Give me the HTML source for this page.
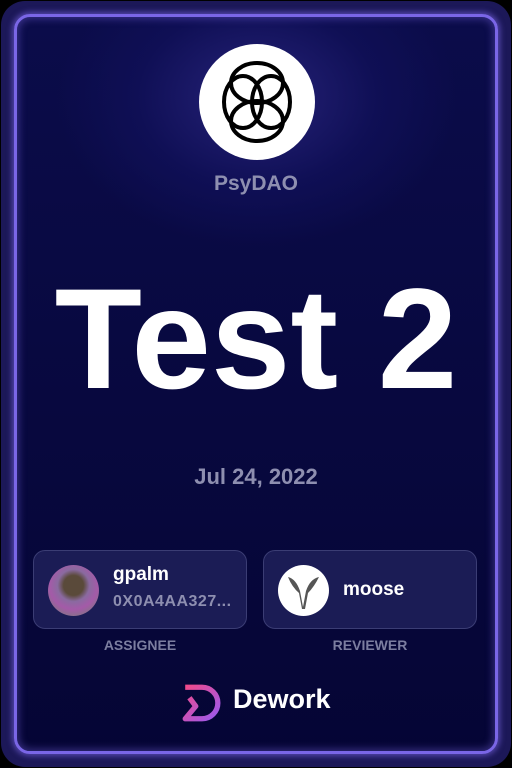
<!DOCTYPE html>
<html><head><style>
html,body{margin:0;padding:0;width:512px;height:768px;background:#000;overflow:hidden;font-family:"Liberation Sans",sans-serif;}
.outer{position:absolute;left:1px;top:1px;width:510px;height:766px;border-radius:24px;background:#1c1858;}
.inner{position:absolute;left:14px;top:14px;width:478px;height:734px;border-radius:16px;border:3px solid #7a66e6;box-shadow:0 0 6px 2px rgba(122,102,230,.6), inset 0 0 8px 2px rgba(122,102,230,.4);
background:radial-gradient(ellipse 200px 150px at 240px 80px,#27237a 0%,#0f0f55 60%,transparent 100%),linear-gradient(#0b0c4a,#050535);overflow:hidden;}
.c{position:absolute;left:0;width:100%;text-align:center;}
.logo{position:absolute;left:182px;top:27px;width:116px;height:116px;border-radius:50%;background:#fff;}
.card{position:absolute;top:533px;width:214px;height:79px;border-radius:12px;background:#1b1c55;border:1px solid #3b3d74;box-sizing:border-box;}
.av{position:absolute;left:14px;top:14px;width:51px;height:51px;border-radius:50%;}
.name{position:absolute;color:#fff;font-weight:bold;font-size:19px;}
.lbl{position:absolute;top:620px;color:#7c7ea0;font-weight:bold;font-size:14px;width:214px;text-align:center;}
</style></head><body>
<div class="outer"></div>
<div class="inner">
 <div class="logo">
  <svg width="116" height="116" viewBox="0 0 116 116" fill="none" stroke="#000" stroke-width="4">
   <ellipse cx="58" cy="39" rx="26" ry="20"/>
   <ellipse cx="58" cy="77" rx="26" ry="20"/>
   <ellipse cx="44" cy="58" rx="19" ry="26"/>
   <ellipse cx="72" cy="58" rx="19" ry="26"/>
  </svg>
 </div>
 <div class="c" style="top:155px;color:#8e8fb0;font-weight:bold;font-size:21px;">PsyDAO</div>
 <div class="c" style="top:248px;color:#fff;font-weight:bold;font-size:143px;line-height:150px;">Test 2</div>
 <div class="c" style="top:447px;color:#8e8fb0;font-weight:bold;font-size:22px;">Jul 24, 2022</div>
 <div class="card" style="left:16px;">
  <div class="av" style="background:radial-gradient(circle at 50% 40%,#5a4a3a 0 25%,#8a6aa0 40%,#a45aa8 60%,#6a8a6a 100%);"></div>
  <div class="name" style="left:79px;top:13px;">gpalm</div>
  <div class="name" style="left:79px;top:42px;font-size:16px;color:#8e8fb0;letter-spacing:.5px;">0X0A4AA327...</div>
 </div>
 <div class="card" style="left:246px;">
  <div class="av" style="background:#fff;"><svg width="51" height="51" viewBox="0 0 51 51"><path d="M10 12 Q18 14 22 26 L25 42 L28 26 Q32 14 41 12 Q36 22 30 28 L27 44 L24 44 L21 28 Q14 22 10 12Z" fill="#555"/></svg></div>
  <div class="name" style="left:79px;top:28px;">moose</div>
 </div>
 <div class="lbl" style="left:16px;">ASSIGNEE</div>
 <div class="lbl" style="left:246px;">REVIEWER</div>
 <svg style="position:absolute;left:164px;top:666px" width="40" height="40" viewBox="0 0 38 38" fill="none">
  <defs><linearGradient id="g" x1="0" y1="0" x2="1" y2="1"><stop offset="0" stop-color="#f04a8a"/><stop offset="1" stop-color="#9a5af0"/></linearGradient></defs>
  <path d="M4 4 H20 A15 15 0 0 1 20 34 H4 L14 22 L8 14" stroke="url(#g)" stroke-width="5" stroke-linejoin="round"/>
 </svg>
 <div style="position:absolute;left:216px;top:667px;color:#fff;font-weight:bold;font-size:27px;">Dework</div>
</div>
</body></html>
